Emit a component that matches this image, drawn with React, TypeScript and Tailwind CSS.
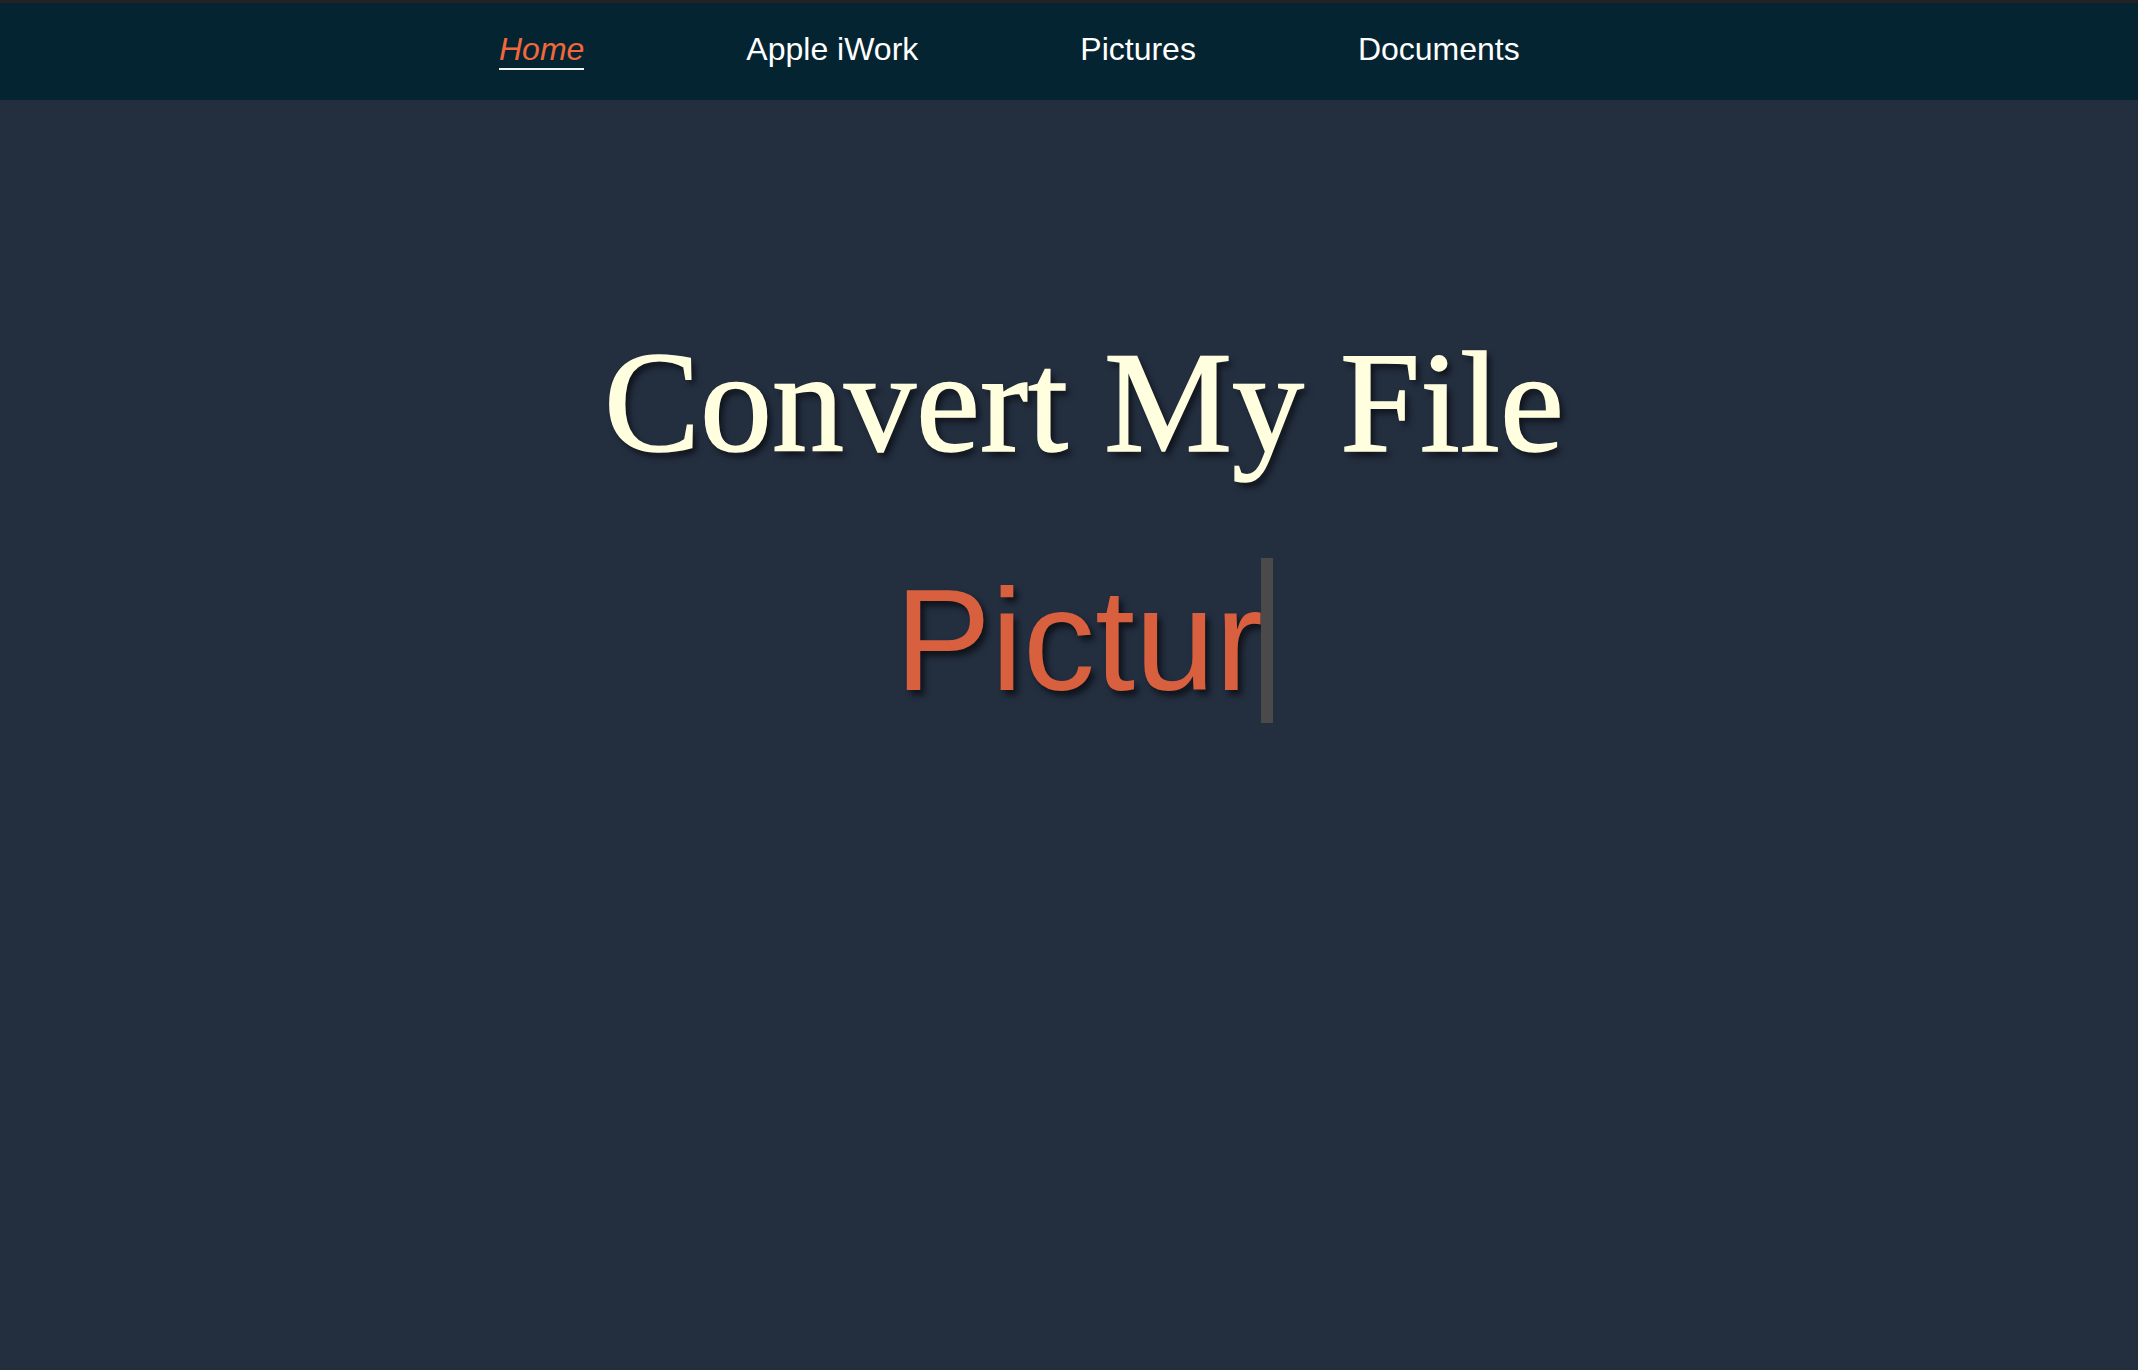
export default function App() {
  return (
    <div className="min-h-[1370px] w-full bg-[#232e3f] flex flex-col">
      <div className="h-[3px] bg-[#222222]" />
      <nav className="h-[97px] bg-[#052431] flex items-start pt-[30px] pl-[499px] gap-[162px] text-[32px] leading-none text-white" style={{ fontFamily: '"Liberation Sans", Arial, sans-serif' }}>
        <span className="italic text-[#f2683c] border-b-2 border-[#f2f2f2] pb-[3px]">Home</span>
        <span>Apple iWork</span>
        <span>Pictures</span>
        <span>Documents</span>
      </nav>
      <main className="flex flex-col items-center pl-[30px]">
        <h1
          className="mt-[231px] text-[144px] leading-none font-normal text-[#ffffe0] [-webkit-text-stroke:1.5px_#ffffe0] [text-shadow:4px_5px_6px_rgba(0,0,0,0.6)]"
          style={{ fontFamily: '"Liberation Serif", "Times New Roman", serif' }}
        >
          Convert My File
        </h1>
        <div className="mt-[83px] flex items-center">
          <span
            className="text-[144px] leading-none text-[#d9603f] [text-shadow:4px_5px_6px_rgba(0,0,0,0.6)]"
            style={{ fontFamily: '"Liberation Sans", Arial, sans-serif' }}
          >
            Pictur
          </span>
          <span className="w-[12px] h-[165px] bg-[#4a4a4a] -ml-[2px]" />
        </div>
      </main>
    </div>
  );
}
